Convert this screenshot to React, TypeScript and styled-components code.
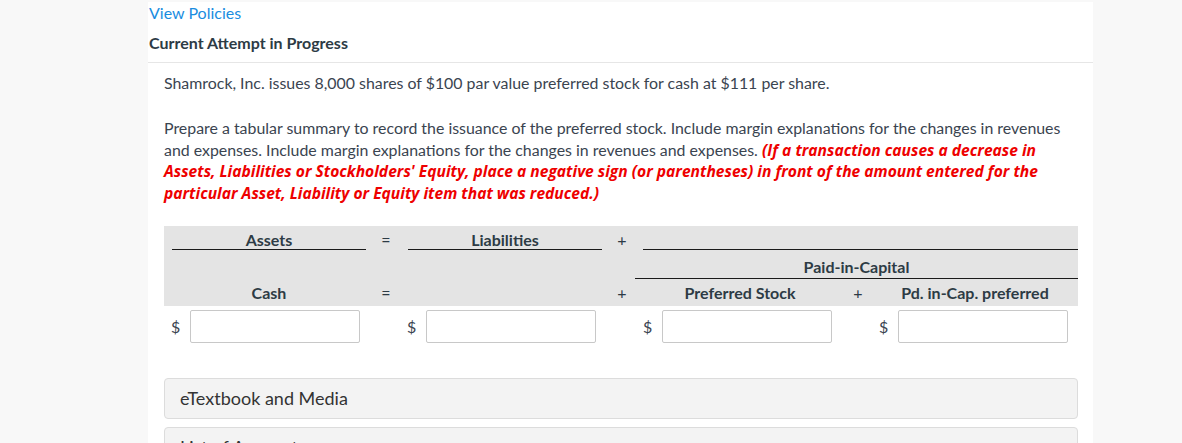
import React from "react";
import styled, { createGlobalStyle } from "styled-components";

const Global = createGlobalStyle`
  html, body { margin: 0; padding: 0; background: #f8f8f8; }
  body { font-family: Lato, "Open Sans", sans-serif; color: #3a4450; }
  * { box-sizing: border-box; }
`;

const Page = styled.div`
  padding: 2px 89px 0 148px;
  height: 443px;
  overflow: hidden;
`;

const Panel = styled.div`
  background: #fff;
  min-height: 441px;
`;

const TopBar = styled.div`
  padding: 0 0 0 1px;
  border-bottom: 1px solid #e6e6e6;
  height: 61px;
`;

const Link = styled.a`
  display: block;
  color: #1a8ddf;
  font-size: 16px;
  line-height: 22px;
  text-decoration: none;
`;

const Title = styled.h3`
  margin: 8px 0 0;
  font-size: 16px;
  font-weight: 700;
  line-height: 22px;
  color: #2d3b45;
`;

const Body = styled.div`
  padding: 9px 15px 0 16px;
`;

const Para = styled.p`
  margin: 0 0 23.5px;
  font-size: 15.9px;
  line-height: 21.5px;
  color: #3a4450;
  width: 914px;

  &:last-of-type {
    margin-bottom: 23px;
  }
`;

const Red = styled.strong`
  color: #ee0000;
  font-family: "Open Sans", sans-serif;
  font-style: italic;
  font-weight: 700;
  font-size: 15.6px;
  line-height: 16px;
`;

const Table = styled.div`
  display: grid;
  grid-template-columns: 208px 28px 208px 28px 208px 28px 206px;
  width: 914px;
`;

const HCell = styled.div<{ $span?: number; $pt?: number; $h: number }>`
  grid-column: span ${(p) => p.$span ?? 1};
  background: #e4e4e4;
  height: ${(p) => p.$h}px;
  padding-top: ${(p) => p.$pt ?? 0}px;
  font-size: 16px;
  font-weight: 700;
  color: #2d3b45;
  text-align: center;
`;

const Label = styled.div<{ $lh: number; $ml?: number; $mr?: number; $line?: boolean }>`
  line-height: ${(p) => p.$lh}px;
  margin: 0 ${(p) => p.$mr ?? 0}px 0 ${(p) => p.$ml ?? 0}px;
  border-bottom: ${(p) => (p.$line ? "1px solid #1a1a1a" : "1px solid transparent")};
  white-space: nowrap;
`;

const Op = styled.div<{ $lh: number }>`
  line-height: ${(p) => p.$lh}px;
  font-weight: 400;
  font-size: 16px;
`;

const InCell = styled.div`
  display: flex;
  align-items: flex-start;
  padding-top: 4px;
  height: 41px;
`;

const Dollar = styled.span`
  width: 26px;
  padding-left: 7px;
  font-size: 16px;
  line-height: 33px;
  color: #3a4450;
`;

const Input = styled.input`
  width: 170px;
  height: 33px;
  border: 1px solid #c8c8c8;
  border-radius: 2px;
  background: #fff;
  font-family: inherit;
  font-size: 16px;
  padding: 0 6px;
`;

const Gap = styled.div``;

const Accordion = styled.div<{ $mt: number }>`
  margin-top: ${(p) => p.$mt}px;
  width: 914px;
  height: 41px;
  background: #f3f3f3;
  border: 1px solid #dcdcdc;
  border-radius: 4px;
  padding: 0 15px;
  font-size: 18px;
  line-height: 38px;
  color: #333;
`;

export default function App() {
  return (
    <>
      <Global />
      <Page>
        <Panel>
          <TopBar>
            <Link href="#">View Policies</Link>
            <Title>Current Attempt in Progress</Title>
          </TopBar>
          <Body>
            <Para>Shamrock, Inc. issues 8,000 shares of $100 par value preferred stock for cash at $111 per share.</Para>
            <Para>
              Prepare a tabular summary to record the issuance of the preferred stock. Include margin explanations for the changes in revenues and expenses. Include margin explanations for the changes in revenues and expenses.{" "}
              <Red>
                (If a transaction causes a decrease in Assets, Liabilities or Stockholders' Equity, place a negative sign (or parentheses) in front of the amount entered for the particular Asset, Liability or Equity item that was reduced.)
              </Red>
            </Para>
            <Table>
              <HCell $h={27} $pt={4}>
                <Label $lh={19} $ml={8} $mr={6} $line>Assets</Label>
              </HCell>
              <HCell $h={27} $pt={4}><Op $lh={19}>=</Op></HCell>
              <HCell $h={27} $pt={4}>
                <Label $lh={19} $ml={8} $mr={6} $line>Liabilities</Label>
              </HCell>
              <HCell $h={27} $pt={4}><Op $lh={19}>+</Op></HCell>
              <HCell $h={27} $pt={4} $span={3}>
                <Label $lh={19} $ml={7} $line>&nbsp;</Label>
              </HCell>

              <HCell $h={26} />
              <HCell $h={26} />
              <HCell $h={26} />
              <HCell $h={26} />
              <HCell $h={26} $pt={3} $span={3}>
                <Label $lh={22} $ml={-1} $line>Paid-in-Capital</Label>
              </HCell>

              <HCell $h={27}><Label $lh={27} $ml={8} $mr={6}>Cash</Label></HCell>
              <HCell $h={27}><Op $lh={27}>=</Op></HCell>
              <HCell $h={27} />
              <HCell $h={27}><Op $lh={27}>+</Op></HCell>
              <HCell $h={27}><Label $lh={27}>Preferred Stock</Label></HCell>
              <HCell $h={27}><Op $lh={27}>+</Op></HCell>
              <HCell $h={27}><Label $lh={27}>Pd. in-Cap. preferred</Label></HCell>

              <InCell><Dollar>$</Dollar><Input /></InCell>
              <Gap />
              <InCell><Dollar>$</Dollar><Input /></InCell>
              <Gap />
              <InCell><Dollar>$</Dollar><Input /></InCell>
              <Gap />
              <InCell><Dollar>$</Dollar><Input /></InCell>
            </Table>
            <Accordion $mt={31}>eTextbook and Media</Accordion>
            <Accordion $mt={8}>List of Accounts</Accordion>
          </Body>
        </Panel>
      </Page>
    </>
  );
}
